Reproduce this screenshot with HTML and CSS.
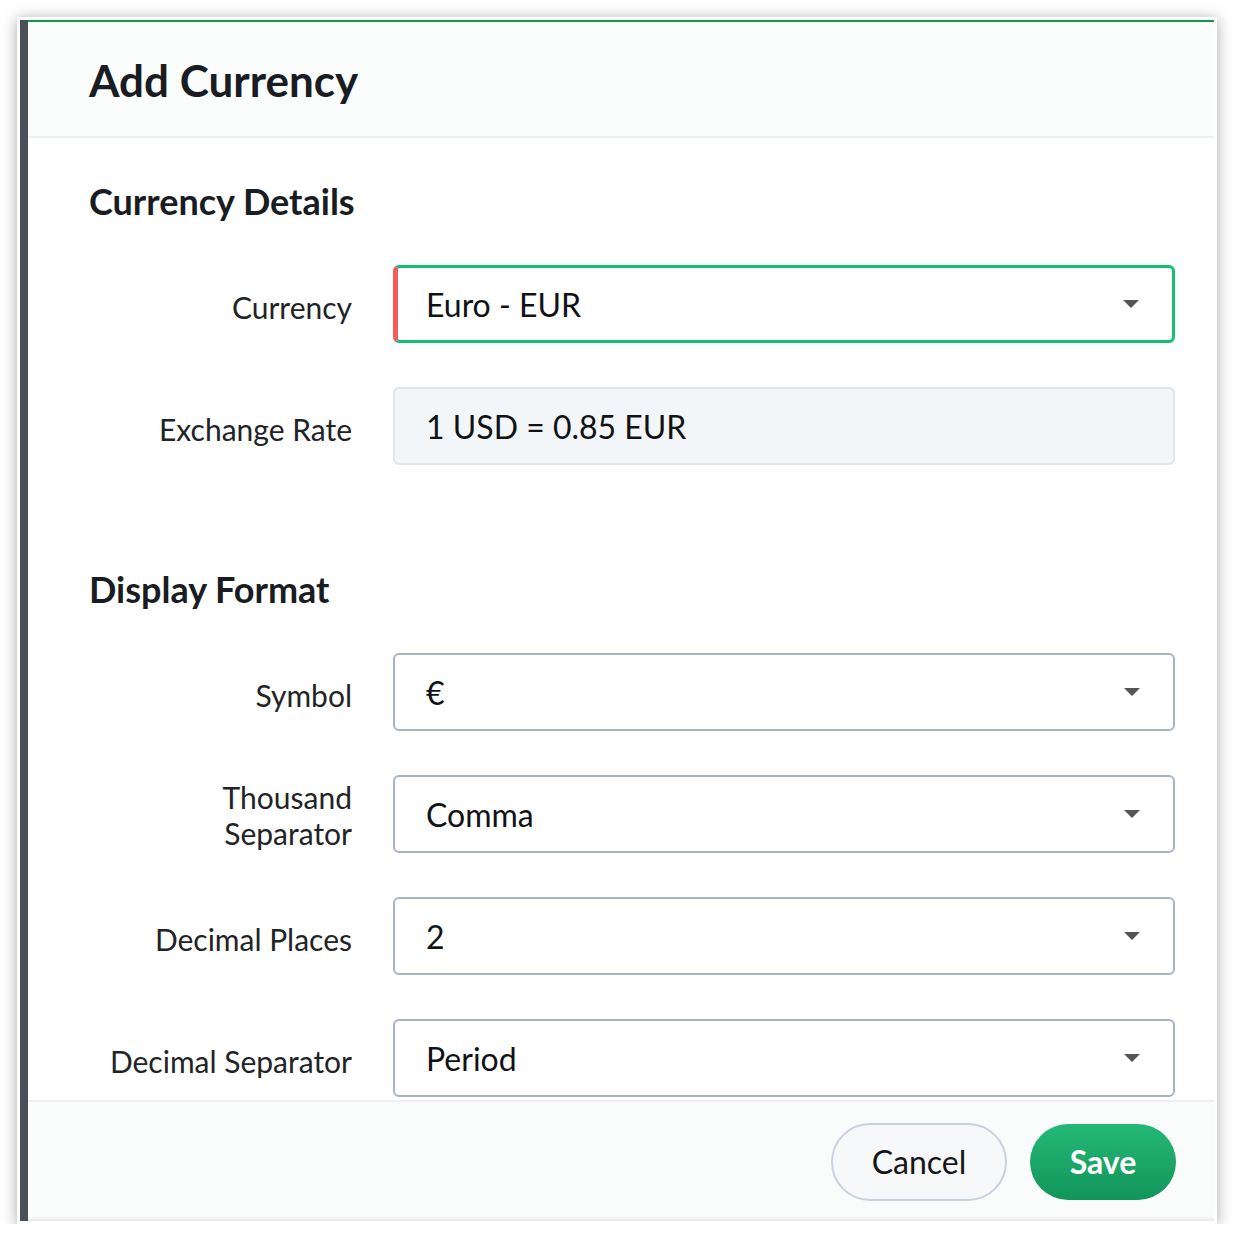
FILE: index.html
```html
<!DOCTYPE html>
<html lang="en">
<head>
<meta charset="utf-8">
<title>Add Currency</title>
<link rel="stylesheet" href="styles.css">
</head>
<body>
<div class="frame">
  <div class="backdrop-strip"></div>
  <div class="modal">
    <header class="modal-header">
      <h1 class="modal-title">Add Currency</h1>
    </header>
    <main class="modal-body">
      <section class="section">
        <h2 class="section-title">Currency Details</h2>
        <div class="row">
          <label class="label">Currency</label>
          <div class="field field-select field-active">
            <span class="value">Euro - EUR</span>
            <svg class="caret" width="16" height="8" viewBox="0 0 16 8"><path d="M0 0H16L8 8Z" fill="#555"/></svg>
          </div>
        </div>
        <div class="row">
          <label class="label">Exchange Rate</label>
          <div class="field field-readonly">
            <span class="value">1 USD = 0.85 EUR</span>
          </div>
        </div>
      </section>
      <section class="section section-gap">
        <h2 class="section-title">Display Format</h2>
        <div class="row">
          <label class="label">Symbol</label>
          <div class="field field-select">
            <span class="value">€</span>
            <svg class="caret" width="16" height="8" viewBox="0 0 16 8"><path d="M0 0H16L8 8Z" fill="#555"/></svg>
          </div>
        </div>
        <div class="row">
          <label class="label label-multi">Thousand<br>Separator</label>
          <div class="field field-select">
            <span class="value">Comma</span>
            <svg class="caret" width="16" height="8" viewBox="0 0 16 8"><path d="M0 0H16L8 8Z" fill="#555"/></svg>
          </div>
        </div>
        <div class="row">
          <label class="label">Decimal Places</label>
          <div class="field field-select">
            <span class="value">2</span>
            <svg class="caret" width="16" height="8" viewBox="0 0 16 8"><path d="M0 0H16L8 8Z" fill="#555"/></svg>
          </div>
        </div>
        <div class="row">
          <label class="label">Decimal Separator</label>
          <div class="field field-select">
            <span class="value">Period</span>
            <svg class="caret" width="16" height="8" viewBox="0 0 16 8"><path d="M0 0H16L8 8Z" fill="#555"/></svg>
          </div>
        </div>
      </section>
    </main>
    <footer class="modal-footer">
      <button class="btn btn-cancel">Cancel</button>
      <button class="btn btn-save">Save</button>
    </footer>
  </div>
</div>
</body>
</html>
```
FILE: styles.css
```css
* { box-sizing: border-box; }

html, body {
  margin: 0;
  padding: 0;
  background: #ffffff;
}

body {
  font-family: Lato, "Noto Sans", sans-serif;
  color: #1b1d24;
}

.frame {
  margin: 17px 0 0 17px;
  width: 1200px;
  height: 1207px;
  border: 3px solid #ffffff;
  background: #ffffff;
  box-shadow: 0 2px 14px rgba(0, 0, 0, 0.35);
  display: flex;
}

.backdrop-strip {
  width: 8px;
  flex: none;
  background: #4a4f5a;
}

.modal {
  flex: 1;
  display: flex;
  flex-direction: column;
  min-width: 0;
  background: #ffffff;
}

.modal-header {
  height: 118px;
  flex: none;
  border-top: 2px solid #0e9a4c;
  border-bottom: 2px solid #edf0f3;
  background: #fbfcfc;
  display: flex;
  align-items: center;
  padding-left: 61px;
}

.modal-title {
  margin: 0;
  font-size: 44px;
  font-weight: 700;
  line-height: 1;
  color: #1a1c23;
  padding-top: 2px;
}

.modal-body {
  flex: 1;
  min-height: 0;
  overflow: hidden;
  padding: 43px 39px 0 61px;
}

.section {
  display: flex;
  flex-direction: column;
  gap: 44px;
}

.section-gap {
  margin-top: 104px;
}

.section-title {
  margin: 0;
  font-size: 36px;
  font-weight: 700;
  line-height: 40px;
  color: #1a1c23;
}

.row {
  display: grid;
  grid-template-columns: 263px 1fr;
  column-gap: 41px;
  align-items: center;
}

.label {
  text-align: right;
  font-size: 30px;
  line-height: 36px;
  color: #222326;
  padding-top: 6px;
}

.label-multi {
  padding-top: 2px;
}

.field {
  height: 78px;
  border: 2px solid #a8b4c2;
  border-radius: 6px;
  background: #ffffff;
  display: flex;
  align-items: center;
  padding: 0 33px 0 31px;
  font-size: 32px;
  color: #111216;
}

.field .value {
  flex: 1;
}

.field-active {
  border: 3px solid #13bf76;
  border-left: 5px solid #f45b5b;
  padding-left: 28px;
}

.field-readonly {
  background: #f3f6f9;
  border-color: #dfe5ea;
}

.caret {
  flex: none;
  display: block;
}

.modal-footer {
  height: 121px;
  flex: none;
  border-top: 2px solid #edf0f3;
  background: #fafbfb;
  box-shadow: inset 0 -5px 5px -4px rgba(0, 0, 0, 0.12);
  display: flex;
  align-items: center;
  justify-content: flex-end;
  gap: 23px;
  padding-right: 38px;
}

.btn {
  font-family: Lato, "Noto Sans", sans-serif;
  font-size: 32px;
  border-radius: 40px;
  cursor: pointer;
}

.btn-cancel {
  width: 176px;
  height: 78px;
  border: 2px solid #c8d2dd;
  background: #f7f8fa;
  color: #15161a;
  font-weight: 400;
}

.btn-save {
  width: 146px;
  height: 76px;
  border: none;
  background: linear-gradient(#25b877, #12955a);
  color: #ffffff;
  font-weight: 700;
}
```
